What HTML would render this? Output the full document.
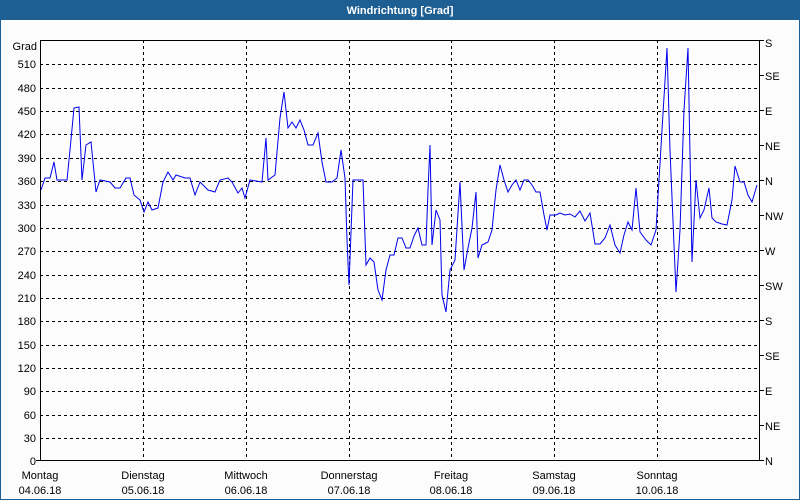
<!DOCTYPE html>
<html><head><meta charset="utf-8"><style>
html,body{margin:0;padding:0;background:#fff}
svg{display:block}
text{font-family:"Liberation Sans",sans-serif;font-size:11px;fill:#000}
</style></head><body>
<svg width="800" height="500" xmlns="http://www.w3.org/2000/svg">
<rect x="0" y="0" width="800" height="500" fill="#fcfcfc"/>
<rect x="0.5" y="0.5" width="799" height="499" fill="none" stroke="#1d5e93"/>
<rect x="0" y="0" width="800" height="20" fill="#1d5e93"/>
<text x="400" y="14" text-anchor="middle" style="fill:#fff;font-weight:bold">Windrichtung [Grad]</text>
<g stroke="#000" stroke-dasharray="3,3" stroke-width="1">
<line x1="40" x2="760" y1="64.5" y2="64.5"/><line x1="40" x2="760" y1="88.5" y2="88.5"/><line x1="40" x2="760" y1="111.5" y2="111.5"/><line x1="40" x2="760" y1="134.5" y2="134.5"/><line x1="40" x2="760" y1="158.5" y2="158.5"/><line x1="40" x2="760" y1="181.5" y2="181.5"/><line x1="40" x2="760" y1="205.5" y2="205.5"/><line x1="40" x2="760" y1="228.5" y2="228.5"/><line x1="40" x2="760" y1="251.5" y2="251.5"/><line x1="40" x2="760" y1="275.5" y2="275.5"/><line x1="40" x2="760" y1="298.5" y2="298.5"/><line x1="40" x2="760" y1="321.5" y2="321.5"/><line x1="40" x2="760" y1="345.5" y2="345.5"/><line x1="40" x2="760" y1="368.5" y2="368.5"/><line x1="40" x2="760" y1="391.5" y2="391.5"/><line x1="40" x2="760" y1="415.5" y2="415.5"/><line x1="40" x2="760" y1="438.5" y2="438.5"/>
<line x1="143.5" x2="143.5" y1="40" y2="461"/><line x1="246.5" x2="246.5" y1="40" y2="461"/><line x1="349.5" x2="349.5" y1="40" y2="461"/><line x1="451.5" x2="451.5" y1="40" y2="461"/><line x1="554.5" x2="554.5" y1="40" y2="461"/><line x1="657.5" x2="657.5" y1="40" y2="461"/>
</g>
<rect x="40.5" y="40.5" width="719" height="420" fill="none" stroke="#000"/>
<g stroke="#000"><line x1="760" x2="764" y1="40.5" y2="40.5"/><line x1="760" x2="764" y1="75.5" y2="75.5"/><line x1="760" x2="764" y1="110.5" y2="110.5"/><line x1="760" x2="764" y1="145.5" y2="145.5"/><line x1="760" x2="764" y1="180.5" y2="180.5"/><line x1="760" x2="764" y1="215.5" y2="215.5"/><line x1="760" x2="764" y1="250.5" y2="250.5"/><line x1="760" x2="764" y1="285.5" y2="285.5"/><line x1="760" x2="764" y1="320.5" y2="320.5"/><line x1="760" x2="764" y1="355.5" y2="355.5"/><line x1="760" x2="764" y1="390.5" y2="390.5"/><line x1="760" x2="764" y1="425.5" y2="425.5"/><line x1="760" x2="764" y1="460.5" y2="460.5"/><line x1="36" x2="40" y1="460.5" y2="460.5"/></g>
<g text-anchor="end">
<text x="37" y="50">Grad</text><text x="36" y="68">510</text><text x="36" y="92">480</text><text x="36" y="115">450</text><text x="36" y="138">420</text><text x="36" y="162">390</text><text x="36" y="185">360</text><text x="36" y="209">330</text><text x="36" y="232">300</text><text x="36" y="255">270</text><text x="36" y="279">240</text><text x="36" y="302">210</text><text x="36" y="325">180</text><text x="36" y="349">150</text><text x="36" y="372">120</text><text x="36" y="395">90</text><text x="36" y="419">60</text><text x="36" y="442">30</text><text x="36" y="465">0</text>
</g>
<g>
<text x="765" y="47">S</text><text x="765" y="80">SE</text><text x="765" y="115">E</text><text x="765" y="150">NE</text><text x="765" y="185">N</text><text x="765" y="220">NW</text><text x="765" y="255">W</text><text x="765" y="290">SW</text><text x="765" y="325">S</text><text x="765" y="360">SE</text><text x="765" y="395">E</text><text x="765" y="430">NE</text><text x="765" y="465">N</text>
</g>
<g text-anchor="middle">
<text x="40" y="479">Montag</text><text x="40" y="494">04.06.18</text>
<text x="143" y="479">Dienstag</text><text x="143" y="494">05.06.18</text>
<text x="246" y="479">Mittwoch</text><text x="246" y="494">06.06.18</text>
<text x="349" y="479">Donnerstag</text><text x="349" y="494">07.06.18</text>
<text x="451" y="479">Freitag</text><text x="451" y="494">08.06.18</text>
<text x="554" y="479">Samstag</text><text x="554" y="494">09.06.18</text>
<text x="657" y="479">Sonntag</text><text x="657" y="494">10.06.18</text>
</g>
<polyline fill="none" stroke="#0000ee" stroke-width="1" points="41,190 45,178 50,178 54,162 57,180 67,180 70,150 74,108 79,107 82,180 86,145 91,142 96,192 100,180 110,182 115,188 120,188 126,178 130,178 134,195 140,200 144,212 148,202 152,210 158,208 163,182 168,172 173,180 176,175 185,178 190,178 195,195 200,182 208,190 215,192 220,180 228,178 232,182 238,193 242,188 245,198 250,180 262,182 266,138 268,180 275,175 280,118 284,92 288,128 292,122 296,128 300,120 304,130 308,145 313,145 318,133 322,162 326,182 332,182 337,178 341,150 345,178 347,240 349,285 353,180 360,180 363,180 366,265 370,258 374,262 378,290 382,300 386,270 390,255 394,255 398,238 402,238 406,248 410,248 414,236 418,228 422,245 426,245 428,190 430,145 432,245 436,210 440,220 442,295 446,312 450,270 455,260 460,182 464,270 468,248 472,228 476,192 478,258 482,245 488,242 492,230 496,190 500,165 504,180 508,192 512,185 516,180 520,190 524,180 528,180 532,185 536,192 540,192 544,215 547,230 550,215 556,215 560,213 565,215 570,214 575,217 580,211 585,221 590,213 595,244 600,244 605,238 610,225 615,245 620,253 624,235 628,222 632,230 636,188 640,232 646,240 651,245 656,230 662,130 667,48 670,150 676,292 680,230 684,110 688,48 692,262 696,180 700,218 704,210 709,188 712,218 716,222 722,224 727,225 732,200 735,166 740,182 744,182 748,195 752,202 757,185"/>
</svg>
</body></html>
